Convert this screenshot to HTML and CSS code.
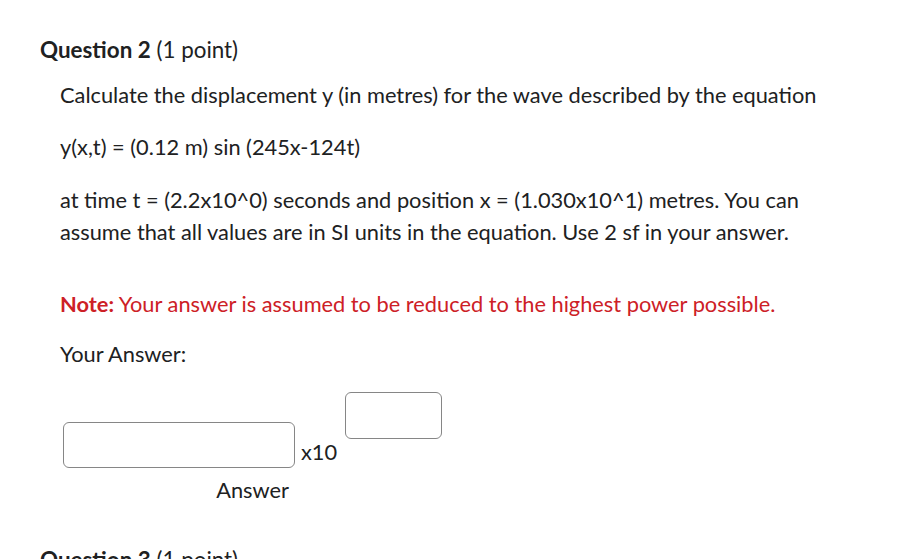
FILE: index.html
```html
<!DOCTYPE html>
<html>
<head>
<meta charset="utf-8">
<link rel="stylesheet" href="styles.css">
</head>
<body>
<div class="page">
  <h2 class="q-title"><strong>Question 2</strong> <span class="pts">(1 point)</span></h2>
  <div class="q-body">
    <p class="para">Calculate the displacement y (in metres) for the wave described by the equation</p>
    <p class="para eq">y(x,t) = (0.12 m) sin (245x-124t)</p>
    <p class="para">at time t = (2.2x10^0) seconds and position x = (1.030x10^1) metres. You can assume that all values are in SI units in the equation. Use 2 sf in your answer.</p>
    <p class="para note"><strong>Note:</strong> Your answer is assumed to be reduced to the highest power possible.</p>
    <p class="para">Your Answer:</p>
    <div class="answer">
      <div class="inputs">
        <input class="box box-main" type="text" aria-label="Answer">
        <span class="times">x10</span>
        <input class="box box-exp" type="text" aria-label="Exponent">
      </div>
      <div class="label">Answer</div>
    </div>
  </div>
  <h2 class="q-title next"><strong>Question 3</strong> <span class="pts">(1 point)</span></h2>
</div>
</body>
</html>
```
FILE: styles.css
```css
html, body {
  margin: 0;
  padding: 0;
  background: #ffffff;
}
body {
  font-family: Lato, "Noto Sans", sans-serif;
  color: #202122;
  width: 919px;
  height: 559px;
  overflow: hidden;
}
.page {
  padding: 34px 0 0 40px;
}
.q-title {
  margin: 0;
  font-size: 22.4px;
  line-height: 32px;
  font-weight: 400;
  color: #202122;
}
.q-title strong {
  font-weight: 700;
}
.q-body {
  padding: 13px 0 0 20px;
}
.para {
  margin: 0 0 20px 0;
  font-size: 21.8px;
  line-height: 32px;
  width: 800px;
}
.eq {
  margin-bottom: 21px;
}
.note {
  margin-top: 40px;
  margin-bottom: 18px;
  color: #cd2026;
}
.note strong {
  font-weight: 700;
}
.answer {
  display: inline-flex;
  flex-direction: column;
  align-items: center;
  padding: 2px 0 0 3px;
}
.inputs {
  display: flex;
  align-items: flex-start;
}
.box {
  box-sizing: border-box;
  border: 1px solid #868686;
  border-radius: 6px;
  background: #fff;
  margin: 0;
  padding: 0;
  font: inherit;
}
.box-main {
  width: 232px;
  height: 46px;
  margin-top: 30px;
}
.box-exp {
  width: 97px;
  height: 47px;
  margin-left: 8px;
}
.label {
  font-size: 21.8px;
  line-height: 28px;
  margin-top: 8px;
}
.times {
  font-size: 21.8px;
  line-height: 28px;
  margin-top: 46px;
  margin-left: 6px;
}
.next {
  margin-top: 40px;
}
```
